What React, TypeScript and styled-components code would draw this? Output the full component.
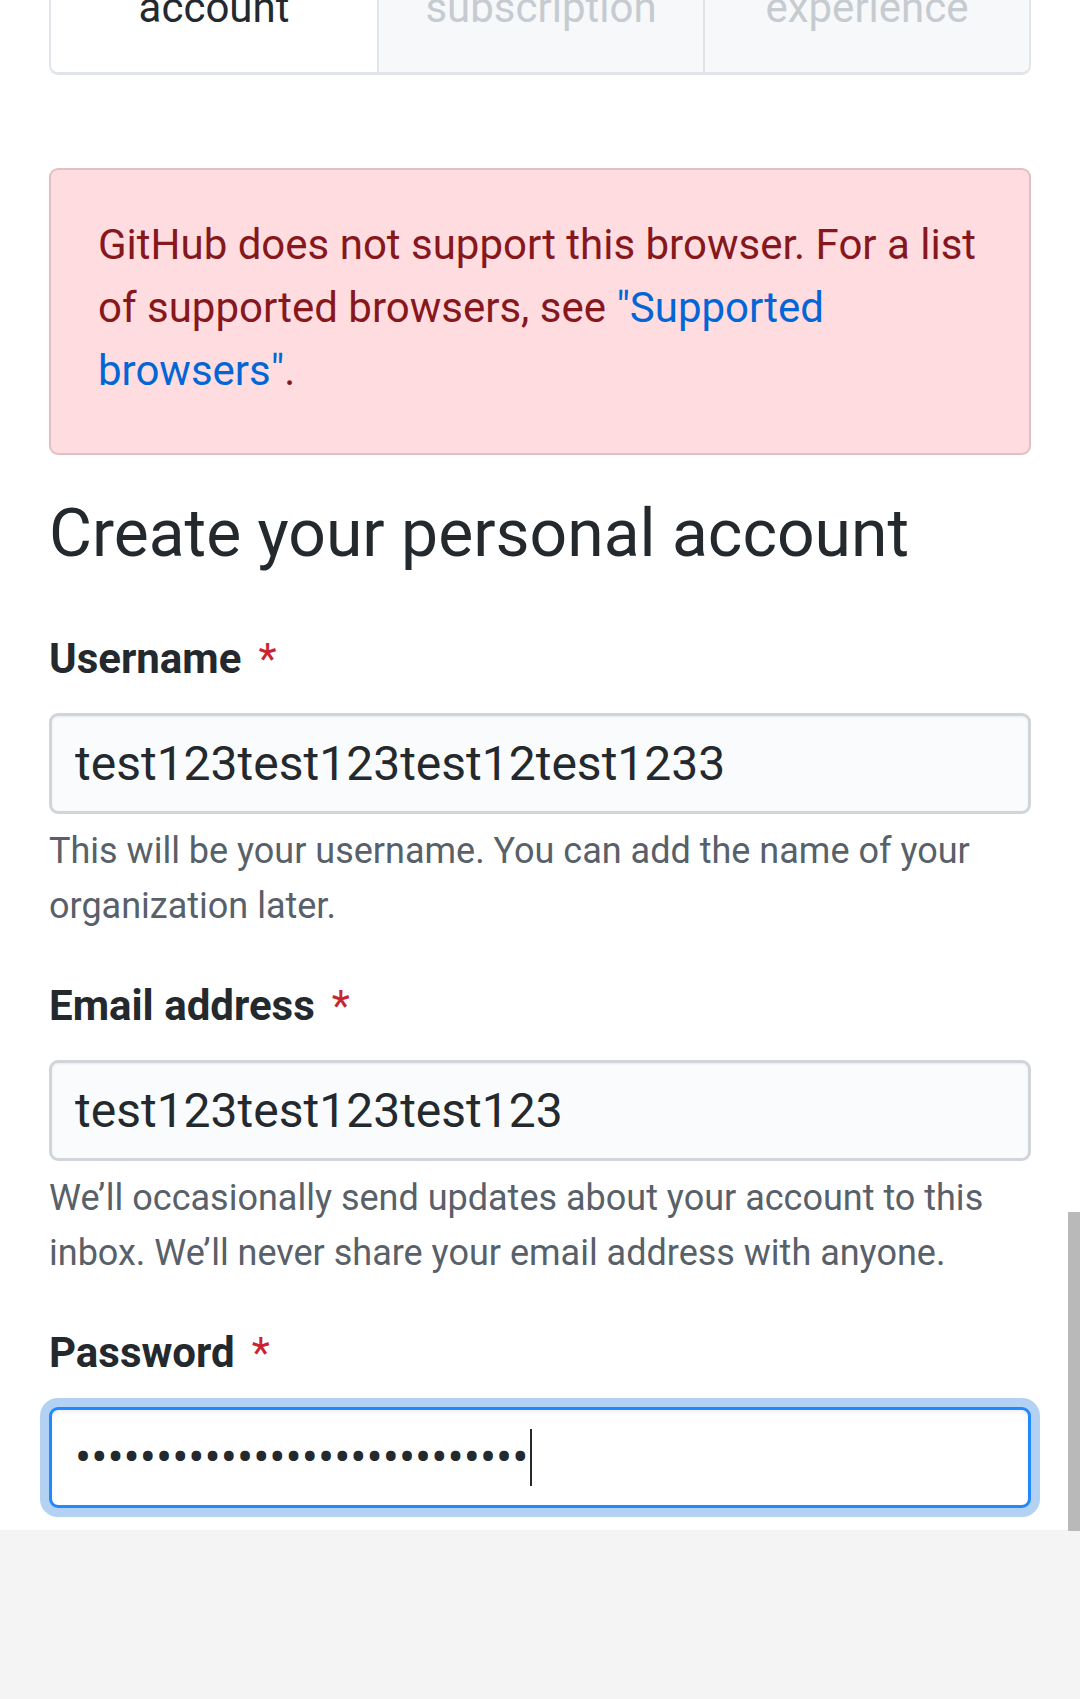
import React from "react";
import styled, { createGlobalStyle } from "styled-components";

const GlobalStyle = createGlobalStyle`
  html, body {
    margin: 0;
    padding: 0;
    background: #f4f4f4;
  }
  body {
    font-family: Roboto, "Noto Sans", "Liberation Sans", Arial, sans-serif;
    overflow: hidden;
    -webkit-font-smoothing: antialiased;
  }
  * { box-sizing: border-box; }
`;

const Page = styled.main`
  position: relative;
  background: #ffffff;
  padding: 0 49px 22px;
`;

const TabBar = styled.nav`
  display: grid;
  grid-template-columns: repeat(3, 1fr);
  margin-top: -48px;
  border: 2px solid #e1e4e8;
  border-radius: 0 0 9px 9px;
  box-shadow: 0 1px 0 #dfe2e6;
  overflow: hidden;
`;

const Tab = styled.div<{ $active?: boolean }>`
  padding: 22px 0 33px;
  text-align: center;
  font-size: 42px;
  line-height: 63px;
  color: ${(p) => (p.$active ? "#24292e" : "#c6cbd1")};
  background: ${(p) => (p.$active ? "#ffffff" : "#f6f8fa")};
  & + & {
    border-left: 2px solid #e1e4e8;
  }
`;

const Flash = styled.div`
  margin-top: 94px;
  padding: 43px 47px 51px;
  background: #ffdce0;
  border: 2px solid #e3bfc4;
  border-radius: 9px;
  color: #86181d;
  font-size: 42px;
  line-height: 63px;
`;

const FlashLink = styled.a`
  color: #0366d6;
  text-decoration: none;
`;

const Heading = styled.h1`
  margin: 29px 0 0;
  font-size: 66px;
  line-height: 99px;
  font-weight: 400;
  color: #24292e;
`;

const Field = styled.div<{ $first?: boolean }>`
  margin-top: ${(p) => (p.$first ? "44px" : "40px")};
`;

const Label = styled.label`
  display: block;
  font-size: 42px;
  line-height: 63px;
  font-weight: 700;
  color: #24292e;
`;

const Required = styled.span`
  margin-left: 17px;
  color: #cb2431;
  font-weight: 400;
`;

const TextInput = styled.input`
  display: block;
  width: 100%;
  height: 101px;
  margin-top: 23px;
  padding: 0 23px;
  border: 3px solid #d1d5da;
  border-radius: 9px;
  background: #fafbfc;
  box-shadow: inset 0 1px 2px rgba(27, 31, 35, 0.075);
  font-family: Roboto, "Noto Sans", Arial, sans-serif;
  font-size: 48px;
  color: #24292e;
  outline: none;
`;

const PasswordBox = styled.div`
  display: flex;
  align-items: center;
  height: 101px;
  margin-top: 23px;
  padding: 0 23px;
  border: 3px solid #2188ff;
  border-radius: 9px;
  background: #ffffff;
  box-shadow: 0 0 0 9px rgba(3, 102, 214, 0.3),
    inset 0 2px 4px rgba(27, 31, 35, 0.075);
`;

const Dots = styled.span`
  font-size: 48px;
  line-height: 1;
  color: #24292e;
  white-space: nowrap;
`;

const Caret = styled.span`
  display: inline-block;
  width: 2px;
  height: 57px;
  margin-left: 2px;
  background: #24292e;
`;

const Note = styled.p`
  margin: 10px 0 0;
  font-size: 36px;
  line-height: 55px;
  color: #586069;
`;

const ScrollThumb = styled.div`
  position: fixed;
  right: 0;
  top: 1212px;
  width: 12px;
  height: 319px;
  background: #b9b9b9;
`;

export default function App() {
  return (
    <>
      <GlobalStyle />
      <Page>
        <TabBar>
          <Tab $active>account</Tab>
          <Tab>subscription</Tab>
          <Tab>experience</Tab>
        </TabBar>

        <Flash>
          GitHub does not support this browser. For a list of supported
          browsers, see <FlashLink href="#">"Supported browsers"</FlashLink>.
        </Flash>

        <Heading>Create your personal account</Heading>

        <Field $first>
          <Label htmlFor="user">
            Username<Required>*</Required>
          </Label>
          <TextInput id="user" readOnly value="test123test123test12test1233" />
          <Note>
            This will be your username. You can add the name of your
            organization later.
          </Note>
        </Field>

        <Field>
          <Label htmlFor="email">
            Email address<Required>*</Required>
          </Label>
          <TextInput id="email" readOnly value="test123test123test123" />
          <Note>
            We’ll occasionally send updates about your account to this inbox.
            We’ll never share your email address with anyone.
          </Note>
        </Field>

        <Field>
          <Label>
            Password<Required>*</Required>
          </Label>
          <PasswordBox role="textbox" aria-label="Password">
            <Dots>{"•".repeat(28)}</Dots>
            <Caret />
          </PasswordBox>
        </Field>
      </Page>
      <ScrollThumb />
    </>
  );
}
